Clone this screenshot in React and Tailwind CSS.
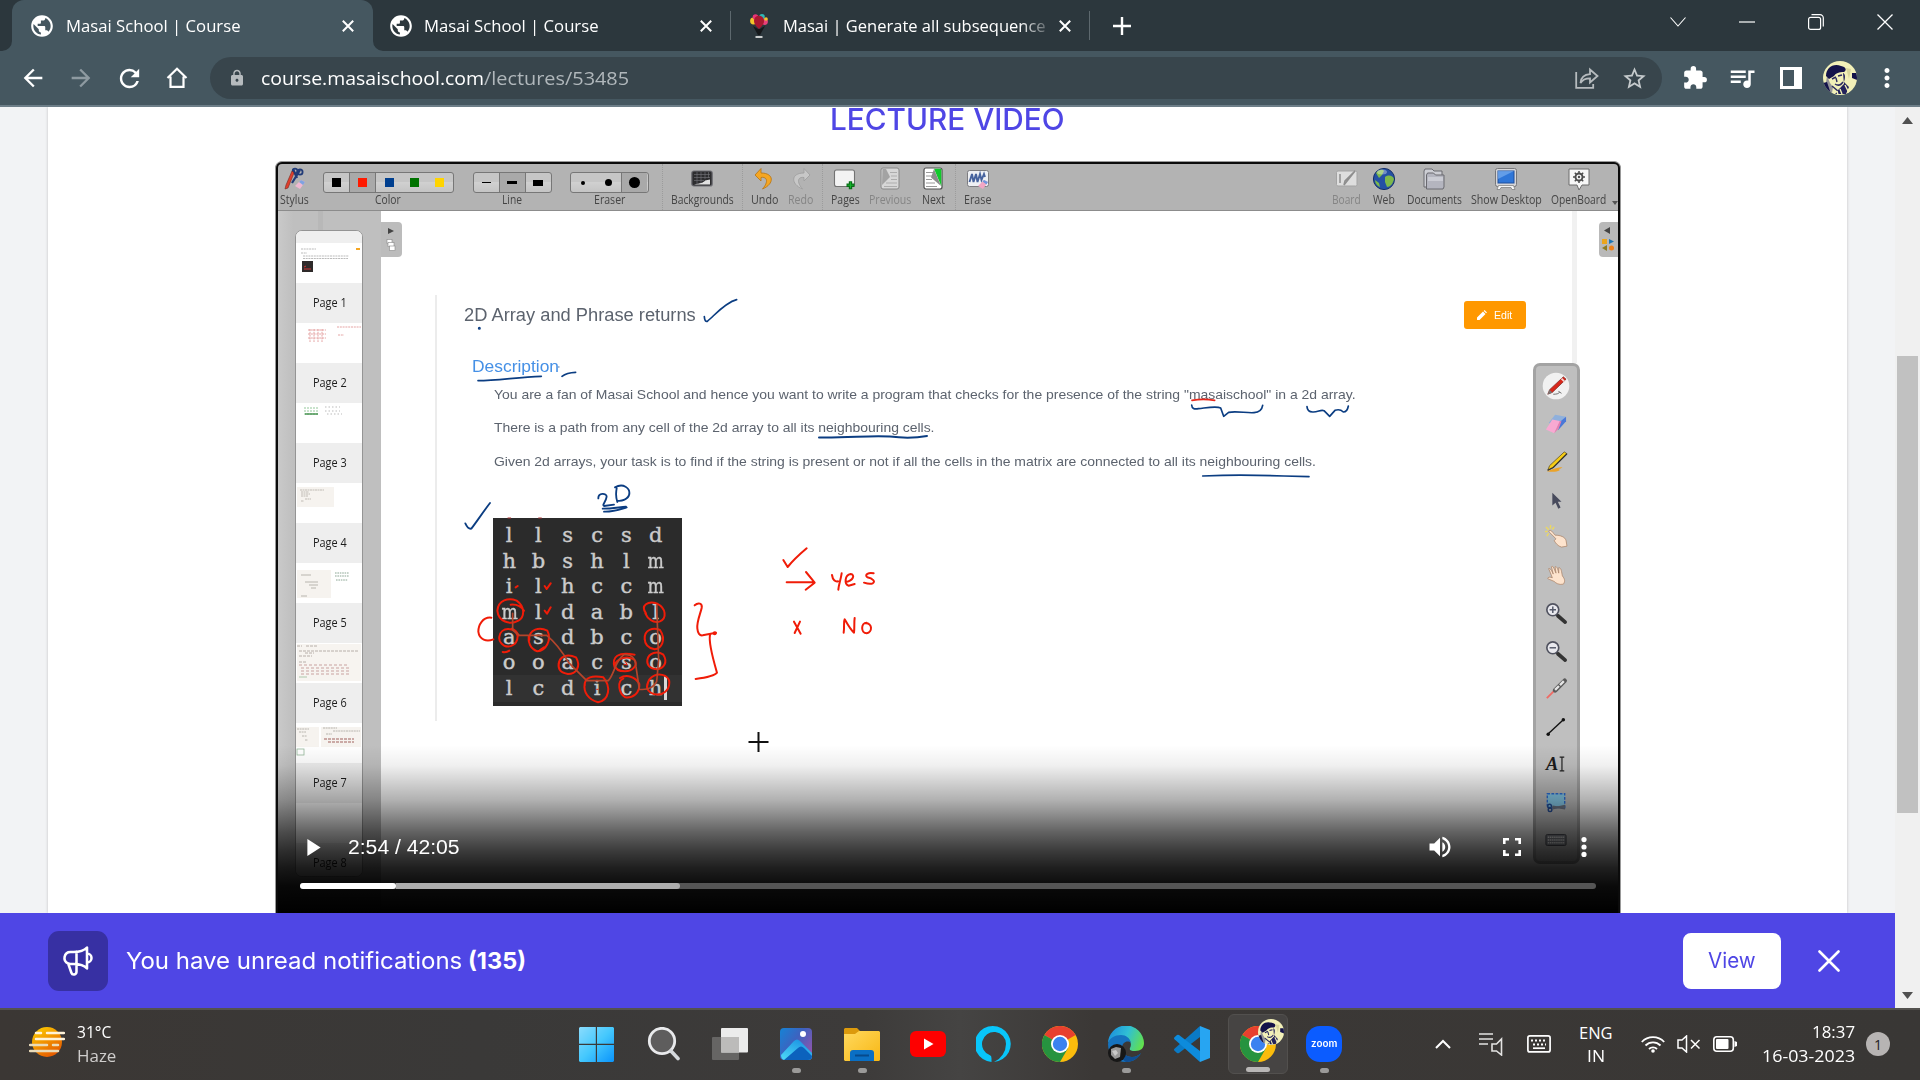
import React, { useLayoutEffect, useRef } from "react";
import {
  MdPublic, MdExtension, MdQueueMusic, MdStarBorder, MdLock, MdArrowBack, MdArrowForward,
  MdRefresh, MdVolumeUp, MdMoreVert,
} from "react-icons/md";

// Stretches or squeezes a single line of text to the width of its box.
function Fit({ className = "", children }) {
  const box = useRef(null);
  const inner = useRef(null);
  useLayoutEffect(() => {
    const natural = inner.current.offsetWidth;
    if (natural) inner.current.style.transform = `scaleX(${box.current.clientWidth / natural})`;
  }, []);
  return (
    <span ref={box} className={"block shrink-0 whitespace-nowrap " + className}>
      <span ref={inner} className="inline-block origin-left">{children}</span>
    </span>
  );
}

const UI = "font-['Open_Sans','Noto_Sans',sans-serif]";

function Close({ className = "" }) {
  return (
    <svg viewBox="0 0 12 12" className={"h-3 w-3 shrink-0 " + className} fill="none" stroke="#fff" strokeWidth="2">
      <path d="M.8.8l10.4 10.4M11.2.8L.8 11.2" />
    </svg>
  );
}

function Portrait({ className }) {
  return (
    <svg viewBox="0 0 34 34" className={className}>
      <clipPath id="portrait"><circle cx="17" cy="17" r="17" /></clipPath>
      <g clipPath="url(#portrait)">
        <rect width="34" height="34" fill="#f2f0b8" />
        <path d="M3 15C3 7 10 2 18 5c5 1 6 4 3 6-5 0-8 1-10 4l-5 3z" fill="#14134a" />
        <path d="M4 15l3 7 3 4-1 6-7-4z" fill="#3a3978" opacity=".5" />
        <path d="M9 18l4-2M15 15l4-1M13 17l1 4M12 23c3 2 6 1 8-2M9 25l6 5 6-6" stroke="#2a2960" strokeWidth="1.4" fill="none" />
        <path d="M20 12c3 1 2 6 1 9l5 5-3 7H12l5-5 4-5z" fill="#24235c" />
        <path d="M22 24l4 8M17 28l2 5M14 30l1 4" stroke="#f2f0b8" strokeWidth="1.4" />
        <path d="M29 12h5v7l-5-2zM0 22l4-1 4 12H4z" fill="#14134a" />
        <path d="M23 7l5 1-2 10z" fill="#d8d69c" />
      </g>
    </svg>
  );
}

function TabStrip() {
  return (
    <div className={"flex h-[51px] shrink-0 items-center bg-[#2c373d] text-[16.5px] leading-5 text-white " + UI}>
      <div className="relative ml-3 flex h-[51px] w-[361px] items-center rounded-t-[12px] bg-[#455760] pl-[17px]">
        <svg viewBox="0 0 10 10" className="absolute -left-[10px] bottom-0 h-[10px] w-[10px]"><path d="M10 0v10H0A10 10 0 0 0 10 0" fill="#455760" /></svg>
        <svg viewBox="0 0 10 10" className="absolute -right-[10px] bottom-0 h-[10px] w-[10px]"><path d="M0 0v10h10A10 10 0 0 1 0 0" fill="#455760" /></svg>
        <MdPublic className="h-[26px] w-[26px]" />
        <Fit className="ml-[11px] w-[175px]">Masai School | Course</Fit>
        <Close className="ml-[101px]" />
      </div>
      <div className="flex h-[51px] w-[357px] items-center pl-[15px]">
        <MdPublic className="h-[26px] w-[26px]" />
        <Fit className="ml-[10px] w-[175px]">Masai School | Course</Fit>
        <Close className="ml-[101px]" />
      </div>
      <div className="h-[29px] w-px bg-[#5d686e]" />
      <div className="flex h-[51px] w-[358px] items-center pl-[18px]">
        <svg viewBox="0 0 20 26" className="h-[26px] w-5">
          <circle cx="4.500" cy="8" r="3.400" fill="#f4c52b" /><circle cx="15.500" cy="8.500" r="3.400" fill="#e8407a" />
          <circle cx="6.500" cy="4" r="2.800" fill="#e93375" /><circle cx="13" cy="3.800" r="2.800" fill="#2fb7b5" />
          <circle cx="17" cy="6" r="1.800" fill="#f4c52b" />
          <path d="M5 8c0-7 10-7 10 0 0 4-5 8-5 8S5 12 5 8" fill="#a8182f" />
          <path d="M4 13l5 9h2l5-9-5 3h-2z" fill="#15181b" />
          <path d="M6.500 24h7" stroke="#c9cccd" strokeWidth="2" />
        </svg>
        <Fit className="ml-[14px] w-[263px] [mask-image:linear-gradient(90deg,#000_90%,rgba(0,0,0,0.250))]">Masai | Generate all subsequence</Fit>
        <Close className="ml-[13px]" />
      </div>
      <div className="h-[29px] w-px bg-[#5d686e]" />
      <svg viewBox="0 0 18 18" className="ml-[23px] h-[18px] w-[18px]" stroke="#fff" strokeWidth="2.4"><path d="M9 0v18M0 9h18" /></svg>
      <svg viewBox="0 0 16 10" className="ml-auto mb-2 h-[10px] w-4" fill="none" stroke="#fff" strokeWidth="1.1"><path d="M.5.5L8 9 15.5.5" /></svg>
      <svg viewBox="0 0 16 16" className="ml-[53px] mb-2 h-4 w-4" stroke="#fff" strokeWidth="1.2"><path d="M0 8h16" /></svg>
      <svg viewBox="0 0 16 16" className="ml-[53px] mb-2 h-4 w-4" fill="none" stroke="#fff" strokeWidth="1.2"><rect x=".6" y="3.4" width="12" height="12" rx="2" /><path d="M3.5.7H12a3.3 3.3 0 0 1 3.3 3.3v8.5" /></svg>
      <svg viewBox="0 0 16 16" className="ml-[53px] mr-[27px] mb-2 h-4 w-4" stroke="#fff" strokeWidth="1.3"><path d="M.5.5l15 15M15.5.5l-15 15" /></svg>
    </div>
  );
}

function AddressBar() {
  return (
    <div className="flex h-[56px] shrink-0 items-center border-b-2 border-[#6d7e88] bg-[#455760] text-white">
      <MdArrowBack className="ml-[19px] h-7 w-7" />
      <MdArrowForward className="ml-[20px] h-7 w-7 text-[#8e9aa1]" />
      <MdRefresh className="ml-[20px] h-[29px] w-[29px]" />
      <svg viewBox="0 0 22 22" className="ml-[22px] h-[22px] w-[22px]" fill="none" stroke="#fff" strokeWidth="2.2"><path d="M1.5 11L11 1.8 20.5 11M4.5 9.5v10.4h13V9.5" /></svg>
      <div className={"ml-[22px] flex h-[42px] w-[1452px] items-center rounded-full bg-[#38454c] text-[18.5px] leading-6 " + UI}>
        <MdLock className="ml-[18px] h-[18px] w-[18px] text-[#b6bbbe]" />
        <Fit className="ml-[15px] w-[223px]">course.masaischool.com</Fit>
        <Fit className="w-[145px] text-[#b0b7bb]">/lectures/53485</Fit>
        <svg viewBox="0 0 24 22" className="ml-auto h-[22px] w-6" fill="none" stroke="#b6bbbe" strokeWidth="1.8"><path d="M1.2 5v15.8h17V17M5.500 16C6 10 9 7.500 15 7.200V2.500L22.500 9 15 15.500v-4.200c-5 0-7.500 1.200-9.500 4.700z" /></svg>
        <MdStarBorder className="ml-[22px] mr-[14px] h-[27px] w-[27px] text-[#c5cacc]" />
      </div>
      <MdExtension className="ml-[20px] h-[26px] w-[26px]" />
      <MdQueueMusic className="ml-[19px] h-[30px] w-[30px]" />
      <svg viewBox="0 0 22 22" className="ml-[23px] h-[22px] w-[22px]"><path d="M0 0h22v22H0zM3 3v16h11V3z" fill="#fff" fillRule="evenodd" /></svg>
      <Portrait className="ml-[21px] h-[34px] w-[34px]" />
      <MdMoreVert className="ml-[15px] h-[30px] w-[30px]" />
    </div>
  );
}

/* ---------- OpenBoard toolbar ---------- */

function Tool({ className = "", label, labelWidth, dim, children }) {
  return (
    <div className={"flex h-[46px] shrink-0 flex-col items-center pt-[3px] " + className}>
      <svg viewBox="0 0 24 24" className={"h-6 w-6 " + (dim ? "opacity-60" : "")}>{children}</svg>
      <div className={"mt-[2px] text-[12.3px] leading-[14px] " + (dim ? "text-[#858585]" : "text-[#454545]")}>
        <Fit className={labelWidth}>{label}</Fit>
      </div>
    </div>
  );
}

const Sep = () => <div className="h-[46px] w-px shrink-0 border-l border-dotted border-[#9c9c9c]" />;

function Segments({ className = "", label, labelWidth, children }) {
  return (
    <div className={"flex h-[46px] shrink-0 flex-col items-center pt-[8px] " + className}>
      <div className="flex h-[21px] w-full overflow-hidden rounded-[3px] border border-[#777] bg-[linear-gradient(#c6c6c6_50%,#d0d0d0_50%,#c4c4c4)]">{children}</div>
      <div className="text-[12.3px] leading-[14px] text-[#454545]">
        <Fit className={labelWidth}>{label}</Fit>
      </div>
    </div>
  );
}

function Seg({ on, left, right, children }) {
  return (
    <div className={"flex flex-1 items-center justify-center " + (on ? "bg-[#a9a9a9] " : "") + (left ? "border-l border-[#777] " : "") + (right ? "border-r border-[#777]" : "")}>
      {children}
    </div>
  );
}

function BoardToolbar() {
  return (
    <div className={"flex h-[47px] items-start border-b border-[#8c8c8c] bg-[#b3b3b3] " + UI}>
      <Tool className="w-[34px]" label="Stylus" labelWidth="w-[29px]">
        <path d="M10 2l4 9M17 3L9 16" stroke="#223c78" strokeWidth="2.2" /><circle cx="17" cy="5" r="2.6" fill="none" stroke="#223c78" strokeWidth="1.8" /><circle cx="12" cy="4" r="2.4" fill="none" stroke="#223c78" strokeWidth="1.6" />
        <path d="M9 4l2 2-6 15-3 1 1-4z" fill="#e03e2c" stroke="#7a2a20" strokeWidth=".6" />
        <path d="M12 19l6-6 4 2-5 7z" fill="#f0b9d2" /><path d="M18 13l4 2-2 3-4-3z" fill="#7ea3e0" />
      </Tool>
      <Segments className="ml-[11px] w-[131px]" label="Color" labelWidth="w-[26px]">
        <Seg><i className="h-[9px] w-[9px] bg-black" /></Seg>
        <Seg on left right><i className="h-[9px] w-[9px] bg-[#ff1a00]" /></Seg>
        <Seg><i className="h-[9px] w-[9px] bg-[#003f8f]" /></Seg>
        <Seg><i className="h-[9px] w-[9px] bg-[#007300]" /></Seg>
        <Seg><i className="h-[9px] w-[9px] bg-[#ffd400]" /></Seg>
      </Segments>
      <Segments className="ml-[19px] w-[79px]" label="Line" labelWidth="w-[20px]">
        <Seg><i className="h-px w-[9px] bg-black" /></Seg>
        <Seg on left right><i className="h-[3px] w-[10px] bg-black" /></Seg>
        <Seg><i className="h-[6px] w-[10px] bg-black" /></Seg>
      </Segments>
      <Segments className="ml-[18px] w-[79px]" label="Eraser" labelWidth="w-[31px]">
        <Seg><i className="h-[4px] w-[4px] rounded-full bg-black" /></Seg>
        <Seg><i className="h-[7px] w-[7px] rounded-full bg-black" /></Seg>
        <Seg on left><i className="h-[11px] w-[11px] rounded-full bg-black" /></Seg>
      </Segments>
      <div className="w-[13px]" />
      <Sep />
      <Tool className="w-[79px]" label="Backgrounds" labelWidth="w-[63px]">
        <rect x="1.800" y="4" width="20.400" height="15" rx="2" fill="#2d2d2f" stroke="#6e6e74" strokeWidth="1.2" />
        <path d="M4 7.500h16M4 10.500h16M4 13.500h10M7 5v12M11 5v12M15 5v7M18.500 5v6" stroke="#77777c" strokeWidth=".6" />
        <path d="M4 17.500c6-1 10-2 11-4l5-1v5z" fill="#e2e2e2" />
      </Tool>
      <Sep />
      <Tool className="ml-[2px] w-[39px]" label="Undo" labelWidth="w-[27px]">
        <path d="M9 1.500L3 8l6 6v-3.500c6-1 8 4 1.500 11.500 12-5 12-16-1.500-16z" fill="#f5a623" stroke="#b87410" strokeWidth=".8" />
      </Tool>
      <Tool className="w-[34px]" label="Redo" labelWidth="w-[25px]" dim>
        <path d="M15 1.500L21 8l-6 6v-3.500c-6-1-8 4-1.500 11.500-12-5-12-16 1.500-16z" fill="#d5d5d5" stroke="#8d8d8d" strokeWidth=".8" />
      </Tool>
      <div className="w-[4px]" />
      <Sep />
      <Tool className="w-[45px]" label="Pages" labelWidth="w-[29px]">
        <rect x="1.500" y="3" width="20" height="16.500" rx="2" fill="#f3f3f3" stroke="#737373" strokeWidth="1.1" />
        <path d="M17.500 14.200v8M13.500 18.200h8" stroke="#0a6d18" strokeWidth="3.400" />
        <path d="M17.500 15.200v6M14.500 18.200h6" stroke="#12b52a" strokeWidth="1" />
      </Tool>
      <Tool className="w-[44px]" label="Previous" labelWidth="w-[42px]" dim>
        <rect x="3" y="1" width="18" height="21" rx="2" fill="#efefef" stroke="#6d6d6d" />
        <path d="M12 5.500h7M13 9h6M13 12.500h6M8 16h11M6 19.500h13" stroke="#aaa" strokeWidth="1.200" />
        <path d="M4.500 2h3.500l4 8-8 8z" fill="#999" />
      </Tool>
      <Tool className="w-[43px]" label="Next" labelWidth="w-[23px]">
        <rect x="3" y="1" width="18" height="21" rx="2" fill="#fff" stroke="#505050" strokeWidth="1.200" />
        <path d="M5 5.500h7M5 9h6M5 12.500h6M5 16h9M5 19.500h11" stroke="#9a9a9a" strokeWidth="1.200" />
        <path d="M13 1.800h7.300v17.500z" fill="#12c92c" /><path d="M13 2L10 10.500l10 8.500z" fill="#8c8c8c" />
      </Tool>
      <Sep />
      <Tool className="w-[44px]" label="Erase" labelWidth="w-[27px]">
        <rect x="1.500" y="3.500" width="21" height="16" rx="2" fill="#eef0f4" stroke="#7c7c80" />
        <path d="M3.500 15L6 7l1.500 8L10 7l1.500 8L14 7l1.500 6L18 7l1 3" fill="none" stroke="#47639e" strokeWidth="1.900" />
        <path d="M12 19l6-6 4 2-5 7z" fill="#f2a6c4" /><path d="M18 13l4 2-1.500 2.500-4-3z" fill="#6f97de" />
      </Tool>
      <Tool className="ml-auto w-[38px]" label="Board" labelWidth="w-[29px]" dim>
        <rect x="1.500" y="4" width="20.500" height="15" rx="1.500" fill="#fcfcfc" stroke="#999" /><path d="M5 7v9M20 4L9 18l1-4z" stroke="#777" strokeWidth="1.500" fill="none" />
      </Tool>
      <Tool className="w-[36px]" label="Web" labelWidth="w-[22px]">
        <circle cx="12" cy="12" r="10.600" fill="#2450a4" stroke="#172f66" />
        <path d="M4 6c3-4 7-4 8-2l-2 4-3 3zM13 10c4-3 8-1 9 2-1 5-4 8-7 8l-2-5zM3 13l4 3 1 4c-3-1-5-4-5-7" fill="#7db84b" />
        <ellipse cx="10" cy="5" rx="5" ry="2.500" fill="#fff" opacity=".35" />
      </Tool>
      <Tool className="w-[65px]" label="Documents" labelWidth="w-[55px]">
        <path d="M2 20V4l1-2h7l2 2h8v16z" fill="#cdced4" stroke="#6a6a70" /><path d="M4.500 22V8l1-2h6l2 2H22v12l-1 2z" fill="#b4b5bf" stroke="#6a6a70" /><path d="M6 12h15" stroke="#e3e3ea" strokeWidth="4" opacity=".5" />
      </Tool>
      <Tool className="w-[79px]" label="Show Desktop" labelWidth="w-[71px]">
        <rect x="1.500" y="1.500" width="21" height="18" rx="2" fill="#d6d6d8" stroke="#77777a" /><rect x="4" y="4" width="16" height="12" fill="#2f76d8" stroke="#1f4f9c" /><path d="M4 4h16L4 12z" fill="#79aef0" opacity=".7" /><path d="M3 22.500l1.500-4h15l1.500 4h-3l-1-2H7l-1 2z" fill="#f5f5f5" stroke="#777" strokeWidth=".7" />
      </Tool>
      <Tool className="w-[66px]" label="OpenBoard" labelWidth="w-[55px]">
        <path d="M2 2h20v16h-7l-3 5-2-5H2z" fill="#f7f7f7" stroke="#6d6d6d" /><circle cx="12" cy="10" r="3.500" fill="none" stroke="#4d4d4d" strokeWidth="1.900" /><path d="M12 4v2.500M12 13.500V16M6 10h2.500M15.500 10H18M7.800 5.800l1.700 1.700M14.500 12.500l1.700 1.700M16.200 5.800l-1.700 1.700M9.500 12.500l-1.700 1.700" stroke="#4d4d4d" strokeWidth="1.500" /><circle cx="12" cy="10" r="1.200" fill="#4d4d4d" />
      </Tool>
      <svg viewBox="0 0 6 4" className="mt-[37px] h-1 w-[6px]"><path d="M0 0h6L3 4z" fill="#555" /></svg>
    </div>
  );
}

/* ---------- page thumbnails ---------- */

const thumbs = [
  <g key="1">
    <path d="M5 6h15M5 10h6M7 13h46M7 15.500h45" stroke="#aaa" strokeWidth=".8" strokeDasharray="2 .7" />
    <rect x="60" y="5" width="4" height="2" fill="#f5a623" /><rect x="6" y="18" width="11" height="11" fill="#2e2a2a" /><path d="M8 26h7M8 24l2-1" stroke="#c33" />
  </g>,
  <g key="2">
    <path d="M12 7h18M12 11h18M12 15h18M14 6v13M18 6v13M22 6v13M26 6v13M41 4h24M42 12h6" stroke="#e29a9a" strokeWidth=".9" strokeDasharray="2 .8" />
  </g>,
  <g key="3">
    <path d="M8 5h14M8 8h14M8 11h14" stroke="#93c79a" strokeDasharray="2 1" /><path d="M9 11h13" stroke="#3f8f49" strokeWidth="1.400" /><path d="M29 4h15M29 8h15M31 11h15" stroke="#aaa" strokeWidth=".8" strokeDasharray="1.500 2" />
  </g>,
  <g key="4">
    <rect x="1" y="4" width="37" height="20" fill="#f6f3ef" /><path d="M4 7h24M5 9h8M5 11h9M5 13h7M9 16h6M5 18h3" stroke="#aaa59e" strokeWidth=".7" strokeDasharray="2 .5" />
  </g>,
  <g key="5">
    <rect x="1" y="7" width="34" height="28" fill="#f6f3ef" /><path d="M5 12h10M9 19h13M13 22h9M15 25h5M5 33h6" stroke="#aaa59e" strokeWidth=".8" /><path d="M39 10h14M39 13h14M40 17h12" stroke="#8ba694" strokeDasharray="1.600 .8" />
  </g>,
  <g key="6">
    <rect x="1" y="1" width="64" height="37" fill="#f7f4f0" /><path d="M1 3h5M10 3h12M3 8h60M9 10h9M3 13h13M3 19h8" stroke="#a79f98" strokeWidth=".8" strokeDasharray="3 1" />
    <path d="M3 22h50M5 25h48M5 28h48M5 31h48" stroke="#c9a2a0" strokeDasharray="3 2" /><path d="M3 34h8" stroke="#8db58f" strokeWidth=".7" />
  </g>,
  <g key="7">
    <rect x="0" y="4" width="23" height="20" fill="#f6f3ef" /><rect x="25" y="4" width="40" height="20" fill="#f6f3ef" /><path d="M1 6h12M3 9h7M6 13h5M9 17h3M27 5h14M37 8h27M30 11h6" stroke="#aaa59e" strokeWidth=".8" strokeDasharray="2 .6" /><path d="M28 16h30M32 19h26" stroke="#bd938f" strokeWidth="1.500" strokeDasharray="3 1" /><rect x="1" y="26" width="7" height="6" fill="none" stroke="#93b79a" strokeWidth=".8" />
  </g>,
  <g key="8" />,
];

function Thumbnails() {
  return (
    <div className="flex h-full w-[103px] shrink-0 flex-col bg-[linear-gradient(90deg,#c9c9c9,#bfbfbf_15%)] pl-[17px]">
      <div className="ml-[23px] h-[19px] w-[5px] bg-[#b8b8b8]" />
      <div className="h-[647px] w-[68px] overflow-hidden rounded-[7px] border-[1.5px] border-[#949494] bg-white">
        <div className="h-[12px] bg-[#efefef]" />
        {thumbs.map((art, i) => (
          <div key={i}>
            <svg viewBox="0 0 65 40" className="h-[40px] w-[65px]">{art}</svg>
            <div className={"flex h-[40px] items-center justify-center bg-[#eee] pl-[3px] text-[12.5px] leading-4 text-[#1c1c1c] " + UI}>
              <Fit className="w-[34px]">{"Page " + (i + 1)}</Fit>
            </div>
          </div>
        ))}
      </div>
    </div>
  );
}

/* ---------- whiteboard ---------- */

const letters = ["llscsd", "hbshlm", "ilhccm", "mldabl", "asdbco", "ooacso", "lcdich"];

function Ink() {
  return (
    <svg viewBox="381 211 1238 702" className="absolute left-0 top-0 h-[702px] w-[1238px]" fill="none" strokeLinecap="round" strokeLinejoin="round">
      <g stroke="#0b3d82" strokeWidth="5" transform="translate(270 150) scale(.33333)">
        <path d="M1303 500Q1304 516 1312 514C1335 495 1365 458 1400 449M624 692C680 692 740 682 814 679M876 679Q890 668 917 667" />
        <circle cx="628" cy="535" r="2" />
        <path d="M866 651h1" strokeWidth="3" />
      </g>
      <g stroke="#0b3d82" strokeWidth="5" transform="translate(1100 280) scale(.33333)">
        <path d="M275 375Q276 390 295 386C330 382 350 378 362 384L371 409 386 397C410 392 440 400 462 398Q485 396 488 376M621 380Q622 397 640 396C655 396 662 388 672 392L689 409 705 391Q720 386 730 396 742 396 745 378M308 588Q400 584 470 586L552 588 627 590" />
        <path d="M276 361Q310 355 344 361" stroke="#e8281c" />
      </g>
      <path d="M819 437.500C850 438 870 435 890 436.500Q910 439 927 436" stroke="#0b3d82" strokeWidth="2" />
      <g transform="translate(440 480) scale(.33333)">
        <g stroke="#0b3d82" strokeWidth="5.500">
          <path d="M76 130Q84 148 94 146C110 125 130 95 150 69M475 55C474 38 500 38 500 50 498 65 485 75 492 78L522 74M530 25C526 45 530 60 532 66M525 22C550 8 570 25 568 42 565 58 545 64 532 62M488 86C515 86 535 82 558 80M492 95C520 96 540 88 560 82" />
        </g>
        <g stroke="#f01c08" strokeWidth="6">
          <path d="M1030 240L1043 261C1060 240 1080 222 1100 205M1040 307H1122M1098 276L1124 308 1097 329" />
          <path d="M1176 285C1178 300 1186 306 1194 304M1205 280C1202 300 1196 315 1195 329M1218 306C1240 302 1246 284 1232 282 1214 284 1212 314 1226 317L1244 312M1301 280C1286 276 1272 284 1282 292 1298 296 1308 304 1298 310Q1290 314 1272 308" />
          <path d="M1062 425L1082 461M1080 425L1064 459M1211 458C1214 440 1210 425 1214 418 1222 432 1234 452 1242 458 1244 444 1242 426 1244 414M1280 428C1262 428 1262 460 1280 460 1298 456 1298 428 1276 430" />
          <path d="M764 376C775 366 788 370 785 384 780 405 770 425 772 445Q774 468 788 466L828 458M810 465C805 490 820 540 831 578Q822 590 767 597" />
          <circle cx="824" cy="460" r="6" fill="#f01c08" stroke="none" />
          <path d="M154 413C128 410 115 435 115 455 118 480 140 486 160 478M172 392C175 360 205 352 230 362 255 380 255 410 235 422 210 436 175 425 172 392M212 374Q240 372 252 392" />
          <path d="M178 470C182 440 225 440 233 468 232 500 200 508 184 490Q176 482 178 470M215 446Q228 450 236 466M188 516Q200 518 208 512M314 318L320 327 332 310M314 392L321 401 332 382M227 322l6-4" />
          <path d="M268 480C265 446 300 440 322 452 336 480 318 512 292 514 270 506 264 486 266 470M300 510L312 502M356 556C356 525 385 522 408 532 424 560 408 582 384 582 362 578 354 570 356 550M434 618C432 590 460 586 490 592 514 620 508 660 474 667 444 658 430 636 434 612" />
          <path d="M524 562C514 530 535 514 584 524M524 555C528 538 560 524 584 540 594 556 578 574 555 574 538 574 526 570 524 555M540 594C560 582 586 590 598 612 600 640 578 654 556 652 536 640 530 604 550 596M622 616C626 586 655 578 676 588 696 600 690 632 664 642 640 648 616 634 622 612" />
          <path d="M618 400C600 375 625 362 650 370 680 385 680 415 660 424 640 432 622 415 616 400M614 478C612 448 640 442 660 450 680 480 664 506 644 508 622 504 614 492 614 474M622 540C626 518 652 512 670 524 684 546 672 566 650 568 630 566 620 556 622 540" />
          <path d="M556 545l6 10-10-2M470 628h4" strokeWidth="3" />
        </g>
        <path d="M218 400V450L238 466H320C350 490 370 520 386 548L440 602H505C525 580 525 540 552 524Q585 520 588 560L598 628C620 630 640 625 650 605L656 540 650 375" stroke="#b5452b" strokeWidth="5" />
        <path d="M204 114h8M296 114h8" stroke="#a33" strokeWidth="3" />
      </g>
      <path d="M748.500 742h20M758.500 732v20" stroke="#111" strokeWidth="2" strokeLinecap="butt" />
    </svg>
  );
}

function Whiteboard() {
  return (
    <div className="relative flex-1 bg-white font-['Liberation_Sans',Arial,sans-serif]">
      <div className="flex h-full">
        <div className="mt-[11px] flex h-[35px] w-[21px] shrink-0 flex-col items-center rounded-r-[4px] bg-[#bcbcbc] pt-[6px]">
          <svg viewBox="0 0 10 24" className="h-6 w-[10px]"><path d="M2 0v6l6-3z" fill="#444" /><rect x="1" y="11.500" width="5" height="4" fill="#fff" stroke="#888" strokeWidth=".6" /><rect x="2" y="14.500" width="6" height="4" fill="#fff" stroke="#888" strokeWidth=".6" /><rect x="3.500" y="18" width="5.500" height="4.500" fill="#fff" stroke="#888" strokeWidth=".6" /></svg>
        </div>
        <div className="mt-[84px] ml-[33px] h-[426px] w-[2px] shrink-0 bg-[#ececec]" />
        <div className="w-[1089px] shrink-0">
          <div className="mt-[90px] flex h-[28px] items-center justify-between pl-[27px] text-[17.500px] text-[#5c636e]">
            <Fit className="w-[232px]">2D Array and Phrase returns</Fit>
            <div className="flex h-[28px] w-[62px] items-center rounded-[3px] bg-[#ff9800] pl-[13px] text-[10px] text-white">
              <svg viewBox="0 0 10 10" className="mr-[7px] h-[10px] w-[10px]"><path d="M0 10V7.500l6-6L8.500 4l-6 6zM6.700.9l.9-.9L10 2.400l-.9.9z" fill="#fff" /></svg>
              <Fit className="w-[18px]">Edit</Fit>
            </div>
          </div>
          <div className="mt-[28px] pl-[35px] text-[17px] leading-5 text-[#4590e6]"><Fit className="w-[87px]">Description</Fit></div>
          <div className="mt-px pl-[57px] text-[13.400px] leading-[33.4px] text-[#5c636e]">
            <Fit className="w-[862px]">You are a fan of Masai School and hence you want to write a program that checks for the presence of the string "masaischool" in a 2d array.</Fit>
            <Fit className="w-[441px]">There is a path from any cell of the 2d array to all its neighbouring cells.</Fit>
            <Fit className="w-[822px]">Given 2d arrays, your task is to find if the string is present or not if all the cells in the matrix are connected to all its neighbouring cells.</Fit>
          </div>
          <div className="mt-[40px] ml-[56px] h-[188px] w-[189px] bg-[linear-gradient(#2b2b2b_157px,#323232_157px,#323232_184px,#2b2b2b_184px)] pt-[5px] pl-[2px] font-['DejaVu_Serif',serif] text-[21px] text-[#cbcbcb] [-webkit-text-stroke:0.4px_#cbcbcb]">
            {letters.map((row, r) => (
              <div key={r} className="flex h-[25.4px] items-center leading-[25px]">
                {row.split("").map((c, i) => (
                  <span key={i} className={"flex w-[29.3px] justify-center " + (c === "m" ? "scale-x-[.82]" : "")}>{c}</span>
                ))}
                {r === 6 && <span className="-ml-[6px] h-[24px] w-[3px] bg-[#d8d8d8]" />}
              </div>
            ))}
          </div>
        </div>
        <div className="ml-[46px] h-[152px] w-[5px] shrink-0 bg-[#f1f1f1]" />
        <div className="mt-[11px] ml-auto flex h-[35px] w-[19px] shrink-0 flex-col items-center rounded-l-[4px] bg-[#b9b9b9] pt-[5px]">
          <svg viewBox="0 0 14 24" className="h-6 w-[14px]"><path d="M9 0v7L3 3.500z" fill="#444" /><rect x="1" y="12" width="5" height="5" fill="#eba51c" /><path d="M8 12v5l5-2.500z" fill="#1a74b4" /><path d="M6 18v6l-5-3z" fill="#8d7b20" /><circle cx="10.500" cy="21" r="2.500" fill="#f08018" /></svg>
        </div>
      </div>
      <Ink />
    </div>
  );
}

/* ---------- floating stylus palette ---------- */

const lens = (
  <>
    <path d="M14 15l8 7" stroke="#333" strokeWidth="4" strokeLinecap="round" />
    <circle cx="8.500" cy="8.500" r="6.500" fill="#e9e9ee" stroke="#50525f" strokeWidth="1.800" />
  </>
);

const palette = [
  <g key="pen"><circle cx="12" cy="12" r="14.500" fill="#f1f1f1" /><path d="M9 21c4 0 8-1 6-3l3 2" stroke="#666" fill="none" /><path d="M20 2l3 2.500L8 19l-5 2 2-5z" fill="#d8271b" stroke="#6a2a25" strokeWidth=".7" /><path d="M5 16l3 3-5 2z" fill="#777" /><path d="M18 4l3 3" stroke="#f4d6d4" strokeWidth="2" /></g>,
  <g key="eraser"><path d="M11 2l12 2-7 10-12-3z" fill="#8fb0dc" /><path d="M8 7l9 2-7 13-9-4z" fill="#f8a9d2" /><path d="M23 4v5l-9 10 3-10z" fill="#4a78d8" /><path d="M10 22l5-5 3-8-2 0z" fill="#e37fb0" /></g>,
  <g key="marker"><path d="M2 22c6-1 12-5 17-4-3 2-4 1-3 3-4 2-8 2-14 1" fill="#eba328" /><path d="M21 1l3 2L9 18l-6 3 2-5z" fill="#f5cc15" stroke="#5c4a10" strokeWidth=".8" /><path d="M24 3L9 18l-6 3" stroke="#333" strokeWidth="1.300" fill="none" /></g>,
  <g key="arrow"><path d="M8 4v14l3.500-3 3 6.500 2.500-1.200-3-6.300H18z" fill="#474a5c" /></g>,
  <g key="point"><path d="M1 1l3 3M6-1v4M0 6h3M2 11l2-3M10 1L8 4" stroke="#ecd860" strokeWidth="1.500" /><path d="M5 5c2-1 4 3 6 5 6 0 11 2 12 6l1 6-6 1c-4-1-6-4-8-7l2-2-7-7c-1-1-1-2 0-2" fill="#fde3cd" stroke="#a98165" strokeWidth=".8" /></g>,
  <g key="hand"><path d="M4 5c2-1 4 4 5 6L7 3c2-2 3 3 5 7l-1-7c2-1 3 3 4 7l0-6c3 0 3 5 4 9 3 4 3 6 1 9-5 1-8-1-10-3l-7-3c0-2 3-2 5-1z" fill="#fde3cd" stroke="#a98165" strokeWidth=".8" /></g>,
  <g key="in">{lens}<path d="M8.500 5v7M5 8.500h7" stroke="#555a6a" strokeWidth="1.600" /></g>,
  <g key="out">{lens}<path d="M5 8.500h7" stroke="#555a6a" strokeWidth="1.600" /></g>,
  <g key="laser"><path d="M2 22l9-9" stroke="#ee6b65" strokeWidth="2" /><path d="M11 13.500L21.500 3" stroke="#5a5a5a" strokeWidth="5" strokeLinecap="round" /><path d="M11 13L21 3" stroke="#e4e4e4" strokeWidth="2.600" strokeDasharray="6 1.500" /></g>,
  <g key="line"><path d="M3 20L20 4" stroke="#111" strokeWidth="1.500" /><circle cx="3.500" cy="20" r="1.900" fill="#111" /><circle cx="20" cy="4" r="1.900" fill="#111" /></g>,
  <g key="text"><text x="1" y="18.500" fontFamily="Liberation Serif, serif" fontStyle="italic" fontWeight="bold" fontSize="20" fill="#1c1c1c">A</text><path d="M16 4.500h5M18.500 4.500v15M16 19.500h5" stroke="#222" strokeWidth="1.300" fill="none" /></g>,
  <g key="cut"><rect x="2.500" y="3" width="19" height="15" fill="#8ad0f0" stroke="#2d72dc" strokeDasharray="3 1.500" strokeWidth="1.500" /><path d="M8 19l14-3M8 17l14 2" stroke="#707888" strokeWidth="2.200" /><circle cx="5" cy="16.500" r="2" fill="none" stroke="#254f98" strokeWidth="1.500" /><circle cx="5.500" cy="20.500" r="2" fill="none" stroke="#254f98" strokeWidth="1.500" /></g>,
  <g key="keys"><rect x="1" y="6" width="22" height="12" rx="1.500" fill="#8a8d94" stroke="#4a4c52" /><path d="M3 9h18M3 12h18M3 15h18" stroke="#fff" strokeWidth="1.400" strokeDasharray="1.400 .7" /></g>,
];

function Palette() {
  return (
    <div className="absolute left-[1258px] top-[199px] flex h-[501px] w-[47px] flex-col items-center rounded-[7px] border-[3px] border-[#a3a3a3] bg-[#bfbfbf] pt-[9px]">
      {palette.map((icon, i) => (
        <div key={i} className="flex h-[37.850px] shrink-0 items-start">
          <svg viewBox="0 0 24 24" className="h-[22px] w-[22px] overflow-visible">{icon}</svg>
        </div>
      ))}
    </div>
  );
}

function VideoControls() {
  return (
    <div className="absolute inset-x-0 bottom-0 flex h-[168px] flex-col justify-end bg-[linear-gradient(transparent,rgba(0,0,0,.06)_12%,rgba(0,0,0,.31)_33%,rgba(0,0,0,.62)_52%,rgba(0,0,0,.77)_63%,rgba(0,0,0,.88)_73%,rgba(0,0,0,.96)_84%,#000)] px-[22px] pb-[24px] font-['Liberation_Sans',Arial,sans-serif]">
      <div className="flex h-[30px] items-center text-white">
        <svg viewBox="0 0 14 18" className="ml-[7px] h-[17px] w-[14px]"><path d="M0 0v18l14-9z" fill="#fff" /></svg>
        <Fit className="ml-[27px] w-[112px] text-[20px] leading-[30px]">2:54 / 42:05</Fit>
        <MdVolumeUp className="ml-auto h-[28px] w-[28px]" />
        <svg viewBox="0 0 18 18" className="ml-[49px] h-[18px] w-[18px]" fill="none" stroke="#fff" strokeWidth="2.600"><path d="M1.300 6V1.300H6M12 1.300h4.700V6M16.700 12v4.700H12M6 16.700H1.300V12" /></svg>
        <svg viewBox="0 0 6 20" className="ml-[60px] mr-[9px] h-5 w-[6px]" fill="#fff"><circle cx="3" cy="2.600" r="2.600" /><circle cx="3" cy="10" r="2.600" /><circle cx="3" cy="17.400" r="2.600" /></svg>
      </div>
      <div className="mt-[21px] flex h-[6px] overflow-hidden rounded-full bg-[#555]">
        <div className="w-[96px] rounded-r-full bg-white" />
        <div className="w-[284px] rounded-r-full bg-[#adadad]" />
      </div>
    </div>
  );
}

function Video() {
  return (
    <div className="mx-auto mt-[30px] w-[1346px] shrink-0 rounded-t-[7px] border-x border-t border-[#999] bg-[#0b0b0b] px-[2px] pt-[2px]">
      <div className="relative h-[749px] overflow-hidden rounded-t-[4px]">
        <BoardToolbar />
        <div className="flex h-[702px]">
          <Thumbnails />
          <Whiteboard />
        </div>
        <div className="absolute -left-[3px] top-0"><Palette /></div>
        <VideoControls />
      </div>
    </div>
  );
}

function Banner() {
  return (
    <div className="flex h-[95px] shrink-0 items-center bg-[#4f46e5] font-['Inter',sans-serif] text-white">
      <div className="ml-12 flex h-[60px] w-[60px] items-center justify-center rounded-[11px] bg-[#3730a3]">
        <svg viewBox="0 0 24 24" className="h-[36px] w-[36px]" fill="none" stroke="#fff" strokeWidth="1.700" strokeLinecap="round" strokeLinejoin="round">
          <path d="M11 5.882V19.240a1.760 1.760 0 01-3.417.592l-2.147-6.150M18 13a3 3 0 100-6M5.436 13.683A4.001 4.001 0 017 6h1.832c4.100 0 7.625-1.234 9.168-3v14c-1.543-1.766-5.067-3-9.168-3H7a3.988 3.988 0 01-1.564-.317z" />
        </svg>
      </div>
      <Fit className="ml-[18px] w-[336px] text-[23.500px]">You have unread notifications</Fit>
      <Fit className="ml-[6px] w-[58px] text-[23.500px] font-bold">(135)</Fit>
      <div className="ml-auto flex h-14 w-[98px] items-center justify-center rounded-[8px] bg-white text-[21px] text-[#4f46e5]"><Fit className="w-[48px]">View</Fit></div>
      <svg viewBox="0 0 22 22" className="ml-[37px] mr-[55px] h-[22px] w-[22px]" stroke="#fff" strokeWidth="2.600" strokeLinecap="round"><path d="M1.500 1.500l19 19M20.500 1.500l-19 19" /></svg>
    </div>
  );
}

/* ---------- Windows taskbar ---------- */

function Chrome() {
  return (
    <svg viewBox="0 0 36 36" className="h-9 w-9">
      <circle cx="18" cy="18" r="18" fill="#fbbc0c" />
      <path d="M18 18L2.400 9A18 18 0 0 1 33.600 9z" fill="#e8402f" />
      <path d="M2.400 9A18 18 0 0 0 18 36l7.800-13.500L18 18z" fill="#26933f" />
      <circle cx="18" cy="18" r="9" fill="#fff" /><circle cx="18" cy="18" r="7.200" fill="#3b82f0" />
    </svg>
  );
}

function Task({ mark, active, className = "mr-[6px]", children }) {
  return (
    <div className={"relative flex h-[60px] w-[60px] shrink-0 items-center justify-center rounded-[6px] " + className + (active ? " border border-[#52504e] bg-[#464443]" : "")}>
      {children}
      {mark && <i className={"absolute bottom-[1px] h-[5px] rounded-full " + (active ? "w-6 bg-[#b9b7b6]" : "w-[9px] bg-[#9b9a99]")} />}
    </div>
  );
}

function Taskbar() {
  return (
    <div className={"flex h-[72px] shrink-0 items-center border-t-2 border-[#54524f] bg-[linear-gradient(90deg,#3b3734,#3a3938_25%,#3d3b3a_45%,#454443_50%,#3b3836_57%,#393735)] pb-[2px] text-[16.500px] text-white " + UI}>
      <svg viewBox="0 0 36 30" className="mb-[4px] ml-[29px] h-[30px] w-9">
        <defs><linearGradient id="sun" x1="0" y1="0" x2=".6" y2="1"><stop stopColor="#ffd500" /><stop offset="1" stopColor="#e65c00" /></linearGradient></defs>
        <circle cx="18" cy="15" r="15" fill="url(#sun)" />
        <path d="M7 6h5M18 6h17M7 12h28" stroke="#fff3d9" strokeWidth="2.500" strokeLinecap="round" /><path d="M1 18h17M24 18h5M1 24h28" stroke="#eadbb8" strokeWidth="2.500" strokeLinecap="round" />
      </svg>
      <div className="ml-3 leading-6">
        <Fit className="w-[34px]">31°C</Fit>
        <Fit className="w-[39px] text-[#cfcdcc]">Haze</Fit>
      </div>
      <div className="ml-[450px] flex">
        <Task className="mr-[8px]">
          <svg viewBox="0 0 35 35" className="h-[35px] w-[35px]"><defs><linearGradient id="win" x1="0" y1="0" x2="1" y2="1"><stop stopColor="#8bdcfd" /><stop offset=".5" stopColor="#45c8fd" /><stop offset="1" stopColor="#0a94fb" /></linearGradient></defs><path d="M1 0h15.800v16.800H0V1zM18 0h16l1 1v15.800H18zM0 18h16.800v17H1l-1-1zM18 18h17v16l-1 1H18z" fill="url(#win)" /></svg>
        </Task>
        <Task>
          <svg viewBox="0 0 34 34" className="h-[34px] w-[34px]"><circle cx="15" cy="14" r="12.700" fill="#5e5d5d" stroke="#e9eaec" strokeWidth="2.800" /><path d="M24 24l7 7.500" stroke="#d5d9dd" strokeWidth="3.600" strokeLinecap="round" /></svg>
        </Task>
        <Task>
          <svg viewBox="0 0 36 33" className="h-[33px] w-9"><rect y="9" width="27" height="23" rx="1" fill="#666564" /><rect x="9" width="27" height="24.500" rx="1" fill="#ececec" /><rect x="9" y="9" width="18" height="15.500" fill="#bcbbba" /></svg>
        </Task>
        <Task mark>
          <svg viewBox="0 0 32 32" className="h-8 w-8"><defs><linearGradient id="photo" x1="0" y1="0" x2="1" y2=".7"><stop stopColor="#1583d6" /><stop offset=".5" stopColor="#3d62bf" /><stop offset="1" stopColor="#8d55ad" /></linearGradient><linearGradient id="hill" x1="0" y1="1" x2=".6" y2="0"><stop stopColor="#4fdcf8" /><stop offset="1" stopColor="#1d96e4" /></linearGradient></defs><rect width="32" height="32" rx="4" fill="url(#photo)" /><path d="M1 27L14 13q3-3 6 0l12 12v3q0 4-4 4H4q-3-1-3-5" fill="url(#hill)" /><path d="M4 32L18 20q3-3 6 0l8 8q0 4-4 4z" fill="#0c62bd" /><circle cx="23" cy="6" r="3" fill="#fff" /></svg>
        </Task>
        <Task mark>
          <svg viewBox="0 0 36 33" className="h-[33px] w-9"><defs><linearGradient id="folder" x1="0" y1="0" x2="1" y2="1"><stop stopColor="#ffd95e" /><stop offset="1" stopColor="#f8b714" /></linearGradient></defs><path d="M0 1l1-1h12l3 3v5H0z" fill="#dc9a0c" /><path d="M0 6h11l4-3h20l1 1v28l-1 1H1l-1-1z" fill="url(#folder)" /><path d="M6 33V25q0-3 3-3h18q3 0 3 3v8z" fill="#0a6fc4" /><path d="M11 27.500h14" stroke="#064a8c" strokeWidth="2" /></svg>
        </Task>
        <Task>
          <svg viewBox="0 0 36 26" className="h-[26px] w-9"><rect width="36" height="26" rx="6" fill="#fe0000" /><path d="M14 7.500v11l9.500-5.500z" fill="#fff" /></svg>
        </Task>
        <Task>
          <svg viewBox="0 0 36 36" className="h-9 w-9"><path d="M15.500 36A18 18 0 1 1 18 36 20 20 0 0 0 30 18 12 12 0 1 0 14 29.300q1.500.7 1.500 3z" fill="#08c6fb" /></svg>
        </Task>
        <Task><Chrome /></Task>
        <Task mark>
          <svg viewBox="0 0 36 36" className="h-9 w-9"><defs><linearGradient id="edge" x1="0" y1=".3" x2="1" y2=".6"><stop stopColor="#1c8fdc" /><stop offset=".5" stopColor="#30bfd4" /><stop offset="1" stopColor="#62e04e" /></linearGradient></defs><path d="M0 18a18 18 0 0 1 36-1c0 5-3 8-9 8-4 0-6-1-5-3 3-6-2-12-9-12S0 15 0 18" fill="url(#edge)" /><path d="M0 18c1-6 7-9 13-9 5 0 9 3 10 8-3-3-9-1-9 5 0 5 4 9 10 9 4 0 7-2 9-4-4 7-10 9-15 9A18 18 0 0 1 0 18" fill="#1573bf" /><path d="M14 22c0 5 4 9 10 9 4 0 7-2 9-4-4 7-10 9-15 9-4-2-6-8-4-14" fill="#0f4e93" /><circle cx="9" cy="27" r="9" fill="#171717" /><path d="M3 23l5-2 5 1-1 9-5 2-4-4z" fill="#999" /><path d="M4 25l4-1 2 3-3 3" fill="#c9c9c9" /></svg>
        </Task>
        <Task>
          <svg viewBox="0 0 36 36" className="h-9 w-9"><path d="M26 0v11L5 27q-1 .7-2 0L.500 24.800q-1-1 0-2z" fill="#0a7ac6" /><path d="M26 36V25L5 9q-1-.7-2 0L.500 11.200q-1 1 0 2z" fill="#0d8bdc" /><path d="M26 0l10 4v28l-10 4z" fill="#27a5f2" /></svg>
        </Task>
        <Task mark active>
          <Chrome />
          <Portrait className="absolute right-[3px] top-[4px] h-[26px] w-[26px]" />
        </Task>
        <Task mark>
          <div className="flex h-9 w-9 items-center justify-center rounded-[14px] bg-[#0b5cff] font-['Inter',sans-serif] text-[9.500px] font-semibold leading-none"><Fit className="w-[26px]">zoom</Fit></div>
        </Task>
      </div>
      <svg viewBox="0 0 16 10" className="ml-auto h-[10px] w-4" fill="none" stroke="#fff" strokeWidth="2"><path d="M1 9l7-7 7 7" /></svg>
      <svg viewBox="0 0 24 24" className="ml-[28px] h-6 w-6" fill="none" stroke="#e4e3e2" strokeWidth="1.600"><path d="M0 2h14M0 7h14M0 12h9M22.500 7v16l-5-4H13v-7h4.500z" /></svg>
      <svg viewBox="0 0 24 18" className="ml-6 h-[18px] w-6" fill="none" stroke="#fff" strokeWidth="1.700"><rect x=".9" y=".9" width="22.200" height="16" rx="2" /><path d="M4 5.500h16M6 9.500h13" strokeDasharray="2 2" strokeWidth="2" /><path d="M6 13.200h12" /></svg>
      <div className="ml-[28px] w-[34px] leading-[23px]">
        <Fit className="w-[34px]">ENG</Fit>
        <Fit className="ml-[8px] w-[18px]">IN</Fit>
      </div>
      <svg viewBox="0 0 24 18" className="ml-[28px] h-[18px] w-6" fill="none" stroke="#fff" strokeWidth="1.800"><path d="M.8 7a15.500 15.500 0 0 1 22.400 0M4.500 10.500a10.500 10.500 0 0 1 15 0M8 14a5.700 5.700 0 0 1 8 0" /><circle cx="12" cy="16" r="1.800" fill="#fff" stroke="none" /></svg>
      <svg viewBox="0 0 24 18" className="ml-3 h-[18px] w-6" fill="none" stroke="#fff" strokeWidth="1.500"><path d="M9.500 1v16L5 13H1V5h4zM14 5l8.500 8.500M22.500 5L14 13.500" /></svg>
      <svg viewBox="0 0 24 16" className="ml-3 h-4 w-6"><rect x=".8" y=".8" width="19.500" height="14.400" rx="3" fill="none" stroke="#fff" strokeWidth="1.600" /><rect x="3" y="3" width="12.500" height="10" rx="1" fill="#fff" /><path d="M21.500 5l2.500 1v4l-2.500 1z" fill="#fff" /></svg>
      <div className="ml-[25px] w-[93px] leading-6">
        <Fit className="ml-[50px] w-[43px]">18:37</Fit>
        <Fit className="w-[93px]">16-03-2023</Fit>
      </div>
      <div className="ml-[11px] mr-[30px] flex h-6 w-6 items-center justify-center rounded-full bg-[#b7b4b3] text-[14px] text-[#222]">1</div>
    </div>
  );
}

export default function App() {
  return (
    <div className="flex h-[1080px] w-[1920px] flex-col overflow-hidden bg-white">
      <TabStrip />
      <AddressBar />
      <div className="flex h-[901px] shrink-0">
        <div className="flex w-[1895px] flex-col">
          <div className="h-[806px] overflow-hidden bg-[#f2f3f5] px-12">
            <div className="flex h-full flex-col bg-white shadow-[0_0_3px_rgba(0,0,0,0.2)]">
              <h1 className="flex h-[24px] shrink-0 justify-center font-['Inter',sans-serif] text-[30px] font-medium leading-[24px] text-[#4f46e5]"><Fit className="w-[235px]">LECTURE VIDEO</Fit></h1>
              <Video />
            </div>
          </div>
          <Banner />
        </div>
        <div className="flex w-[25px] flex-col items-center bg-[#f0f0f0]">
          <svg viewBox="0 0 11 7" className="mt-[10px] h-[7px] w-[11px] shrink-0"><path d="M5.500 0L11 7H0z" fill="#505050" /></svg>
          <div className="mt-[232px] h-[457px] w-[21px] bg-[#c1c1c1]" />
          <svg viewBox="0 0 11 7" className="mt-[179px] h-[7px] w-[11px] shrink-0"><path d="M5.500 7L11 0H0z" fill="#505050" /></svg>
        </div>
      </div>
      <Taskbar />
    </div>
  );
}
